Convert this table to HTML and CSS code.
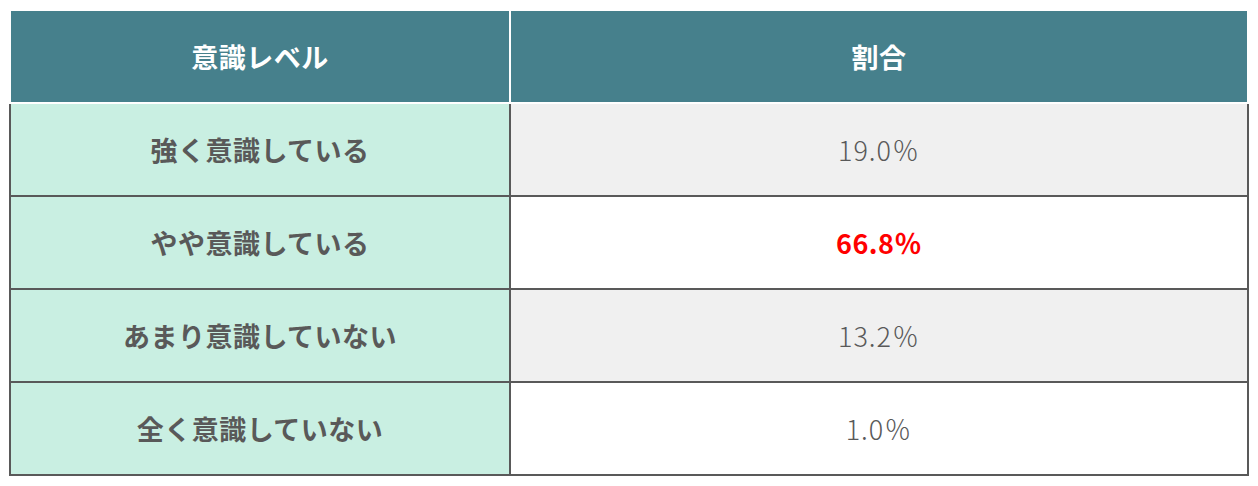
FILE: index.html
```html
<!DOCTYPE html>
<html lang="ja">
<head>
<meta charset="utf-8">
<link rel="stylesheet" href="styles.css">
</head>
<body>
<div class="tbl">
  <div class="cell th">意識レベル</div>
  <div class="cell th th-r">割合</div>

  <div class="cell lab">強く意識している</div>
  <div class="cell val gray">19.0％</div>

  <div class="cell lab">やや意識している</div>
  <div class="cell val hl">66.8％</div>

  <div class="cell lab">あまり意識していない</div>
  <div class="cell val gray">13.2％</div>

  <div class="cell lab">全く意識していない</div>
  <div class="cell val">1.0％</div>
</div>
</body>
</html>
```
FILE: styles.css
```css
* { box-sizing: border-box; }
body {
  margin: 0;
  background: #fff;
  font-family: "Noto Sans CJK JP", "Noto Sans", sans-serif;
}
.tbl {
  display: grid;
  grid-template-columns: 500px 740px;
  margin: 11px 0 0 9px;
}
.cell {
  height: 93px;
  display: flex;
  align-items: center;
  justify-content: center;
  font-size: 27px;
  color: #595959;
  border-bottom: 2px solid #595959;
}
.th {
  background: #46808c;
  color: #fff;
  font-weight: 700;
  letter-spacing: 0.5px;
  border-left: 2px solid #fff;
  border-bottom: 2px solid #fff;
}
.th-r { border-right: 2px solid #fff; }
.lab {
  background: #c9efe2;
  font-weight: 700;
  letter-spacing: 0.5px;
  border-left: 2px solid #595959;
}
.val {
  background: #fff;
  font-weight: 300;
  letter-spacing: 1px;
  border-left: 2px solid #595959;
  border-right: 2px solid #595959;
}
.val.gray { background: #f0f0f0; }
.val.hl { color: #ff0000; font-weight: 700; letter-spacing: 0.5px; }
```
